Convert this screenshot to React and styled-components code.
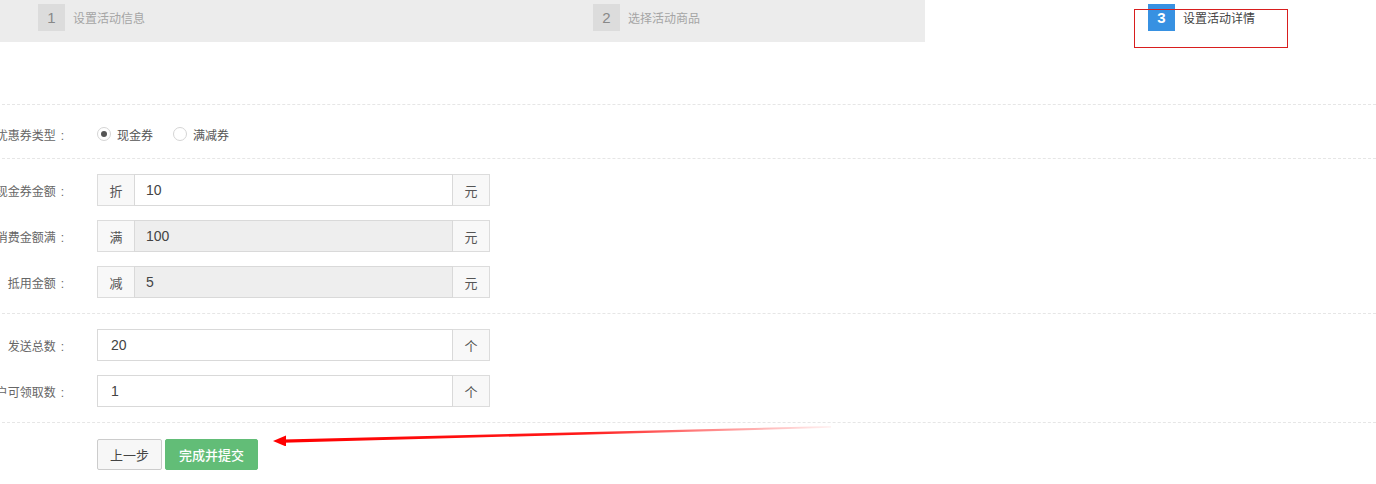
import React from "react";
import styled, { createGlobalStyle } from "styled-components";

const GlobalStyle = createGlobalStyle`
  html, body {
    margin: 0;
    padding: 0;
    background: #fff;
    overflow: hidden;
  }
  body {
    font-family: "Liberation Sans", "Noto Sans CJK SC", sans-serif;
    font-size: 12px;
    color: #666;
  }
`;

const steps = [
  { num: 1, title: "设置活动信息" },
  { num: 2, title: "选择活动商品" },
  { num: 3, title: "设置活动详情", active: true },
];

const App = () => {
  return (
    <Page>
      <GlobalStyle />
      <StepBar>
        {steps.map((s) => (
          <Step key={s.num}>
            <StepNum $active={s.active}>{s.num}</StepNum>
            <StepTitle $active={s.active}>{s.title}</StepTitle>
          </Step>
        ))}
      </StepBar>
      <Highlight />

      <Form>
        <Section $first>
          <Row>
            <Label>优惠券类型<Colon>:</Colon></Label>
            <Control>
              <Radio>
                <RadioDot $checked />
                现金券
              </Radio>
              <Radio>
                <RadioDot />
                满减券
              </Radio>
            </Control>
          </Row>
        </Section>

        <Section>
          <Rows>
            <Row>
              <Label>现金券金额<Colon>:</Colon></Label>
              <InputGroup>
                <Addon>折</Addon>
                <Field>10</Field>
                <Addon $end>元</Addon>
              </InputGroup>
            </Row>
            <Row>
              <Label>消费金额满<Colon>:</Colon></Label>
              <InputGroup>
                <Addon>满</Addon>
                <Field $disabled>100</Field>
                <Addon $end>元</Addon>
              </InputGroup>
            </Row>
            <Row>
              <Label>抵用金额<Colon>:</Colon></Label>
              <InputGroup>
                <Addon>减</Addon>
                <Field $disabled>5</Field>
                <Addon $end>元</Addon>
              </InputGroup>
            </Row>
          </Rows>
        </Section>

        <Section>
          <Rows>
            <Row>
              <Label>发送总数<Colon>:</Colon></Label>
              <InputGroup>
                <Field $first>20</Field>
                <Addon $end>个</Addon>
              </InputGroup>
            </Row>
            <Row>
              <Label>每用户可领取数<Colon>:</Colon></Label>
              <InputGroup>
                <Field $first>1</Field>
                <Addon $end>个</Addon>
              </InputGroup>
            </Row>
          </Rows>
        </Section>

        <Section $last>
          <Row>
            <Label />
            <Control>
              <Button>上一步</Button>
              <Button $primary>完成并提交</Button>
            </Control>
          </Row>
        </Section>
      </Form>

      <Arrow width="570" height="26" viewBox="0 0 570 26">
        <defs>
          <linearGradient id="fade" x1="0" y1="0" x2="1" y2="0">
            <stop offset="0" stopColor="#ff0000" stopOpacity="1" />
            <stop offset="0.55" stopColor="#ff0000" stopOpacity="0.9" />
            <stop offset="1" stopColor="#ff0000" stopOpacity="0.05" />
          </linearGradient>
        </defs>
        <path d="M14 19.5 L562 6 L562 7.8 L14 22.8 Z" fill="url(#fade)" />
        <path d="M4 21 L17 15.5 L17 26.5 Z" fill="#ff0000" />
      </Arrow>
    </Page>
  );
};

const Page = styled.div`
  position: relative;
  width: 1376px;
  height: 484px;
`;

const StepBar = styled.div`
  display: flex;
  height: 42px;
  background: linear-gradient(90deg, #ececec 925px, transparent 925px);
`;

const Step = styled.div`
  flex: 0 0 555px;
  display: flex;
  align-items: flex-start;
  padding: 4px 0 0 38px;
  box-sizing: border-box;
`;

const StepNum = styled.span`
  width: 27px;
  height: 27px;
  line-height: 27px;
  text-align: center;
  font-size: 15px;
  background: ${(p) => (p.$active ? "#3791e2" : "#dcdcdc")};
  color: ${(p) => (p.$active ? "#fff" : "#888")};
  font-weight: ${(p) => (p.$active ? "bold" : "normal")};
`;

const StepTitle = styled.span`
  margin-left: 8px;
  padding-top: 2px;
  line-height: 27px;
  font-size: 12px;
  color: ${(p) => (p.$active ? "#444" : "#a5a5a5")};
`;

const Highlight = styled.div`
  position: absolute;
  left: 1134px;
  top: 9px;
  width: 152px;
  height: 37px;
  border: 1px solid #d81e1e;
`;

const Form = styled.div`
  margin: 62px 0 0 -53px;
`;

const Section = styled.div`
  border-top: 1px dashed #e6e6e6;
  padding: ${(p) =>
    p.$first ? "13px 0 8px" : p.$last ? "15px 0 0" : "15px 0 15px"};
`;

const Rows = styled.div`
  display: flex;
  flex-direction: column;
  gap: 14px;
`;

const Row = styled.div`
  display: flex;
  align-items: center;
  height: 32px;
`;

const Label = styled.div`
  flex: 0 0 120px;
  text-align: right;
  white-space: nowrap;
  color: #666;
  font-size: 12px;
`;

const Colon = styled.span`
  margin: 0 3px 0 5px;
`;

const Control = styled.div`
  display: flex;
  align-items: center;
  margin-left: 30px;
`;

const Radio = styled.label`
  display: flex;
  align-items: center;
  margin-right: 20px;
  color: #555;
  font-size: 12px;
`;

const RadioDot = styled.span`
  position: relative;
  width: 12px;
  height: 12px;
  border: 1px solid #d5d5d5;
  border-radius: 50%;
  margin-right: 6px;
  background: #fff;
  &::after {
    content: "";
    display: ${(p) => (p.$checked ? "block" : "none")};
    position: absolute;
    left: 3px;
    top: 3px;
    width: 6px;
    height: 6px;
    border-radius: 50%;
    background: #555;
  }
`;

const InputGroup = styled.div`
  display: flex;
  width: 393px;
  height: 32px;
  margin-left: 30px;
`;

const Addon = styled.span`
  flex: 0 0 37px;
  box-sizing: border-box;
  display: flex;
  align-items: center;
  justify-content: center;
  border: 1px solid #dcdcdc;
  ${(p) => (p.$end ? "border-left: none;" : "border-right: none;")}
  background: #f8f8f8;
  color: #555;
  font-size: 13px;
`;

const Field = styled.div`
  flex: 1;
  box-sizing: border-box;
  display: flex;
  align-items: center;
  padding-left: ${(p) => (p.$first ? "13px" : "11px")};
  border: 1px solid #d9d9d9;
  background: ${(p) => (p.$disabled ? "#eeeeee" : "#fff")};
  color: #444;
  font-size: 14px;
`;

const Button = styled.button`
  height: 31px;
  box-sizing: border-box;
  padding: 0 ${(p) => (p.$primary ? "13px" : "12px")};
  margin-right: 3px;
  border: 1px solid ${(p) => (p.$primary ? "#62bd77" : "#cccccc")};
  border-radius: 2px;
  background: ${(p) => (p.$primary ? "#62bd77" : "#f7f7f7")};
  color: ${(p) => (p.$primary ? "#fff" : "#444")};
  font-family: "Noto Sans CJK SC", sans-serif;
  font-size: 13px;
  font-weight: ${(p) => (p.$primary ? 500 : 400)};
`;

const Arrow = styled.svg`
  position: absolute;
  left: 269px;
  top: 420px;
`;

export default App;
